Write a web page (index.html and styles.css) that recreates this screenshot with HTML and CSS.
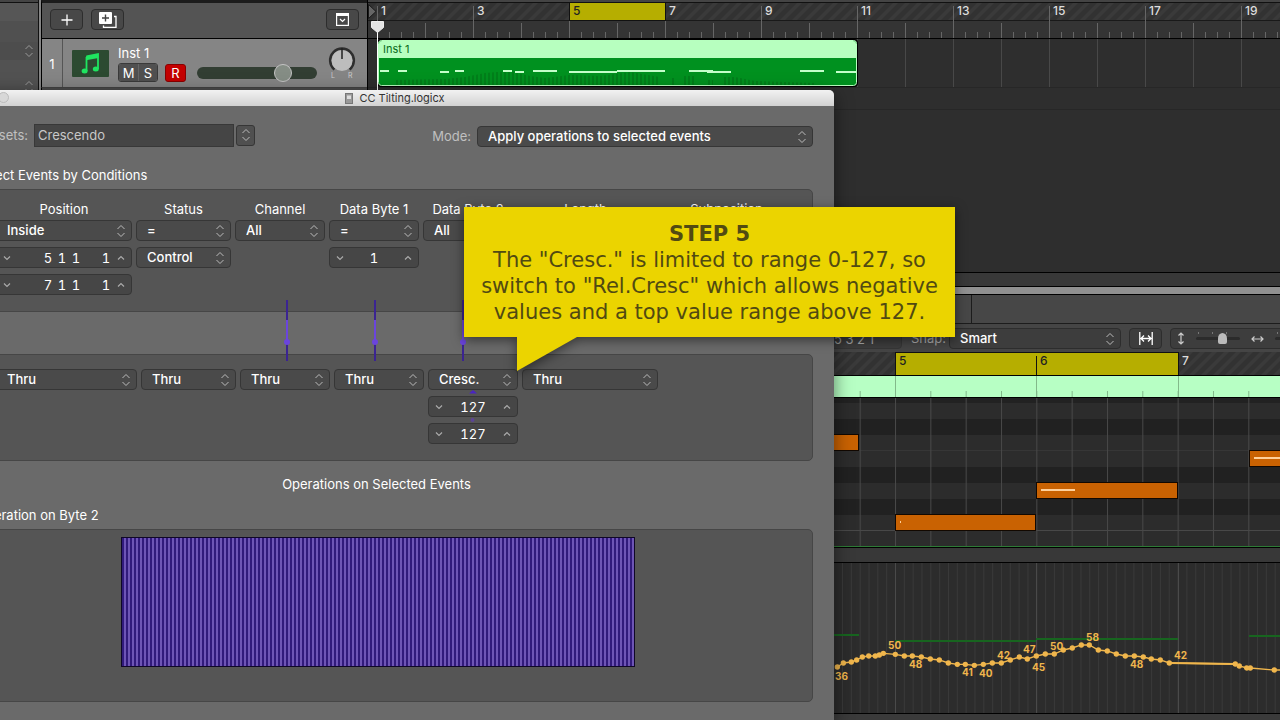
FILE: index.html
```html
<!DOCTYPE html>
<html lang="en">
<head>
<meta charset="utf-8">
<title>CC Tilting.logicx</title>
<link rel="stylesheet" href="styles.css">
</head>
<body>
<svg class="defs" width="0" height="0" aria-hidden="true">
  <defs>
    <symbol id="updown" viewBox="0 0 10 14"><path d="M1.500 5 5 1.500 8.500 5M1.500 9 5 12.500 8.500 9" fill="none" stroke="currentColor"/></symbol>
    <symbol id="down" viewBox="0 0 8 6"><path d="M1 1.500 4 4.500 7 1.500" fill="none" stroke="currentColor" stroke-width="1.200"/></symbol>
    <symbol id="up" viewBox="0 0 8 6"><path d="M1 4.500 4 1.500 7 4.500" fill="none" stroke="currentColor" stroke-width="1.200"/></symbol>
    <pattern id="hatch" width="12" height="12" patternUnits="userSpaceOnUse" patternTransform="skewX(-45)"><rect width="12" height="12" fill="#323232"/><rect width="5" height="12" fill="#3a3a3a"/></pattern>
  </defs>
</svg>
<main class="desktop">
  <section class="arrange" aria-label="Tracks">
    <aside class="inspector">
      <svg class="chev" width="10" height="14"><use href="#updown"/></svg>
      <svg class="chev" width="10" height="14"><use href="#updown"/></svg>
    </aside>
    <div class="tracks">
      <header class="track-tools">
        <button class="tool" aria-label="Add track"><svg width="12" height="12" viewBox="0 0 12 12"><path d="M6 .5v11M.5 6h11" stroke="#fff" stroke-width="1.300"/></svg></button>
        <button class="tool" aria-label="Duplicate track"><svg width="18" height="16" viewBox="0 0 18 16"><path d="M15 4.500h2v11H4.500v-2M15 4.500h2" fill="none" stroke="#fff" stroke-width="1.300"/><rect width="13" height="12" rx="1" fill="#fff"/><path d="M6.500 2.500v7M3 6h7" stroke="#444" stroke-width="1.400"/></svg></button>
        <button class="tool last" aria-label="Track header settings"><svg width="13" height="13" viewBox="0 0 13 13"><rect x=".6" y=".6" width="11.800" height="11.800" fill="none" stroke="#fff" stroke-width="1.200"/><path d="M0 1.700h13" stroke="#fff" stroke-width="2.600"/><path d="M4 6l2.500 2.500L9 6" fill="none" stroke="#fff" stroke-width="1.200"/></svg></button>
      </header>
      <article class="track">
        <span class="number">1</span>
        <svg class="track-icon" width="37" height="27" viewBox="0 0 37 27"><rect width="37" height="27" rx="1" fill="#2c4a31"/><path d="M14.500 6.500 26 4v15" fill="none" stroke="#1fe560" stroke-width="1.800"/><path d="M14 6.200 26.500 4v4L14 10.200z" fill="#1fe560"/><path d="M14.500 7v14" stroke="#1fe560" stroke-width="1.800"/><ellipse cx="12.600" cy="21" rx="3" ry="2.500" fill="#1fe560"/><ellipse cx="23.800" cy="19" rx="3" ry="2.500" fill="#1fe560"/></svg>
        <div class="track-main">
          <div class="track-name">Inst 1</div>
          <div class="track-buttons">
            <span class="pair"><button>M</button><button>S</button></span>
            <button class="record">R</button>
            <input class="volume" type="range" aria-label="Volume" min="0" max="100" value="75">
          </div>
        </div>
        <svg class="pan" width="32" height="34" viewBox="0 0 32 34"><path d="M8.500 23.500A11.800 11.800 0 1 1 23.500 23.500" fill="none" stroke="#2e2e2e" stroke-width="2.600"/><circle cx="16" cy="14.500" r="10.500" fill="#bdbdbd"/><path d="M16 2v11" stroke="#222" stroke-width="1.500"/><text x="5" y="32" class="pan-text">L</text><text x="22" y="32" class="pan-text">R</text></svg>
      </article>
    </div>
    <svg class="timeline" role="img" aria-label="Timeline">
      <defs>
        <pattern id="ticks" x="9" width="12" height="40" patternUnits="userSpaceOnUse"><path d="M.5 32v6" stroke="#666"/></pattern>
        <pattern id="bars" x="9" width="48" height="40" patternUnits="userSpaceOnUse"><path d="M.5 23v15" stroke="#666"/></pattern>
        <pattern id="doubles" x="9" width="96" height="40" patternUnits="userSpaceOnUse"><path d="M.5 6v32" stroke="#666"/></pattern>
        <pattern id="grid" x="9" width="48" height="200" patternUnits="userSpaceOnUse"><path d="M.5 0v200" stroke="#484848"/></pattern>
        <pattern id="velocity" width="4" height="50" patternUnits="userSpaceOnUse"><rect width="2" height="50" fill="#007f1a"/></pattern>
      </defs>
      <rect width="100%" height="3" fill="#444"/><path d="M0 2.500h2000" stroke="#111"/>
      <rect y="3" width="100%" height="17" fill="url(#hatch)"/>
      <rect y="20" width="100%" height="18" fill="#343434"/><path d="M0 20.500h2000" stroke="#191919"/>
      <rect x="9" width="2000" height="38" fill="url(#ticks)"/><rect x="9" width="2000" height="38" fill="url(#bars)"/><rect x="9" width="2000" height="38" fill="url(#doubles)"/>
      <rect x="201.500" y="2.500" width="96" height="18" fill="#b6ae00" stroke="#111"/>
      <path d="M0 38.500h2000" stroke="#000"/>
      <rect x="9" y="39" width="2000" height="48" fill="url(#grid)"/>
      <path d="M0 87.500h2000M0 109.500h2000" stroke="#272727"/>
      <path d="M.5 4.500 8 11.500.5 18.500z" fill="#666" stroke="#1a1a1a"/>
      <g class="bar-text"><text x="13" y="15">1</text><text x="109" y="15">3</text><text x="205" y="15" class="dark">5</text><text x="301" y="15">7</text><text x="397" y="15">9</text><text x="493" y="15">11</text><text x="589" y="15">13</text><text x="685" y="15">15</text><text x="781" y="15">17</text><text x="877" y="15">19</text></g>
      <rect x="9" y="39" width="481" height="48" rx="4" fill="#000"/>
      <rect x="10.500" y="40.500" width="478" height="45" rx="3" fill="#00911f" stroke="#b7ffbf"/>
      <path d="M11 58V44q0-3 3-3h471q3 0 3 3v14z" fill="#b7ffbf"/>
      <path d="M27 85V80L77 79 97 77 117 73 142 71 162 76 177 78 202 75 232 76 262 72 292 77V85zM303 85v-7h4v7zM314 85v-9h12v9zM340 85v-5h5v5zM355 85v-8h12l20 4 60 2v2z" fill="url(#velocity)"/>
      <path d="M12 71h9M30 71h9M72 72h9M87 71h9M135 71h9M147 72h9M165 71h24M201 72h48M249 71h48M321 71h24M339 72h24M432 71h24M468 72h20" stroke="#c4ffca" stroke-width="2"/>
      <text x="15" y="53" class="region-text">Inst 1</text>
      <path d="M9.500 30v65" stroke="#fff"/><path d="M3.500 21.500h12v6l-6 5-6-5z" fill="#e4e4e4" stroke="#eee"/>
    </svg>
  </section>
  <div class="divider"></div>
  <section class="editor" aria-label="Piano roll">
    <div class="editor-tabs"></div>
    <div class="editor-tools">
      <button class="tool held">5 3 2 1</button>
      <label class="snap" for="snap">Snap:</label>
      <span class="pick snap-pick"><select id="snap"><option>Smart</option></select><svg width="10" height="14"><use href="#updown"/></svg></span>
      <button class="tool" aria-label="Fit horizontally"><svg width="14" height="13" viewBox="0 0 14 13"><path d="M.8 0v13M13.200 0v13M2 6.500h10M5 3.500l-3 3 3 3M9 3.500l3 3-3 3" fill="none" stroke="#fff" stroke-width="1.300"/></svg></button>
      <div class="zoomers">
        <svg width="8" height="13" viewBox="0 0 8 13"><path d="M4 1v11M1.500 3.500 4 1l2.500 2.500M1.500 9.500 4 12l2.500-2.500" fill="none" stroke="#ccc" stroke-width="1.200"/></svg>
        <span class="zoom-slider"><input type="range" aria-label="Vertical zoom" value="64"></span>
        <svg class="wide" width="13" height="8" viewBox="0 0 13 8"><path d="M1 4h11M3.500 1.500 1 4l2.500 2.500M9.500 1.500 12 4 9.500 6.500" fill="none" stroke="#ccc" stroke-width="1.200"/></svg>
        <span class="zoom-slider"><input type="range" aria-label="Horizontal zoom" value="64"></span>
      </div>
    </div>
    <svg class="roll" role="img" aria-label="Notes">
      <defs>
        <pattern id="beats" x="895" width="35.330" height="300" patternUnits="userSpaceOnUse"><path d="M.5 0v300" stroke="#484848"/></pattern>
        <pattern id="greenBeats" x="895" width="35.330" height="60" patternUnits="userSpaceOnUse"><path d="M.5 39v7" stroke="#82b98a"/></pattern>
      </defs>
      <rect width="100%" height="24" fill="url(#hatch)"/>
      <rect x="895.500" y=".5" width="283" height="23" fill="#b6ae00" stroke="#111"/><path d="M1036.500 4v20" stroke="#111"/>
      <g class="bar-text"><text x="899" y="13" class="dark">5</text><text x="1040" y="13" class="dark">6</text><text x="1182" y="13">7</text></g>
      <rect y="24" width="100%" height="21" fill="#b7ffc4"/><rect y="24" width="100%" height="21" fill="url(#greenBeats)"/>
      <path d="M895.500 24v21M1036.500 24v21M1178.500 24v21" stroke="#82b98a"/>
      <path d="M0 23.500h3000M0 45.500h3000" stroke="#000"/>
      <rect y="46" width="100%" height="148" fill="#2c2c2c"/>
      <path d="M0 48.500h3000" stroke="#222" stroke-width="5"/><path d="M0 75h3000M0 123h3000M0 155h3000" stroke="#212121" stroke-width="16"/>
      <path d="M0 98.500h3000" stroke="#363636"/>
      <rect y="46" width="100%" height="148" fill="url(#beats)"/>
      <path d="M0 178.500h3000" stroke="#484848"/>
      <g fill="#c96202" stroke="#120800"><rect x="720.500" y="82.500" width="138" height="16"/><rect x="895.500" y="162.500" width="140" height="16"/><rect x="1036.500" y="130.500" width="141" height="16"/><rect x="1249.500" y="98.500" width="283" height="16"/></g>
      <path d="M1041 138h34M1254 106h80M900 170h1" stroke="#ffd09a" stroke-width="2"/>
      <path d="M0 194.500h3000" stroke="#2d7a35"/>
    </svg>
    <div class="lane-head"></div>
    <svg class="automation" role="img" aria-label="Controller automation">
      <defs>
        <pattern id="sub" x="895" width="8.830" height="300" patternUnits="userSpaceOnUse"><path d="M.5 0v300" stroke="#393939"/></pattern>
        <marker id="dot" markerWidth="18" markerHeight="18" refX="9" refY="9" markerUnits="userSpaceOnUse"><circle cx="9" cy="9" r="8" fill="#f0b64c"/></marker>
      </defs>
      <rect width="100%" height="100%" fill="url(#sub)"/><path d="M895.500 0v200M1036.500 0v200M1178.500 0v200" stroke="#4a4a4a"/>
      <path d="M834 72h25M895 78h141M1036 76h142M1249 73h300" stroke="#17651f" stroke-width="2"/>
      <g transform="translate(830 -3) scale(.3333)"><path d="M1018 309 1216 312" stroke="#f0b64c" stroke-width="6"/><polyline fill="none" stroke="#f0b64c" stroke-width="4" marker-start="url(#dot)" marker-mid="url(#dot)" marker-end="url(#dot)" points="22,321 40,309 64,306 80,300 97,291 116,288 136,288 148,285 160,280 196,283 223,288 247,288 274,291 301,297 328,300 355,309 382,313 406,313 433,316 460,313 487,309 514,309 541,300 568,291 592,297 619,288 646,282 673,282 700,270 727,264 754,255 778,255 805,270 832,273 859,282 886,288 913,288 940,291 964,297 991,300 1018,309 1216,312 1228,318 1250,324 1261,324 1333,330 1400,330"/></g>
      <g class="value-text"><text x="835" y="117">36</text><text x="888" y="86">50</text><text x="909" y="105">48</text><text x="962" y="113">41</text><text x="979" y="114">40</text><text x="997" y="96">42</text><text x="1023" y="90">47</text><text x="1032" y="108">45</text><text x="1050" y="87">50</text><text x="1086" y="78">58</text><text x="1130" y="105">48</text><text x="1174" y="96">42</text></g>
    </svg>
    <div class="editor-foot"></div>
  </section>

  <section class="window" aria-label="CC Tilting.logicx">
    <header class="titlebar">
      <button class="light" aria-label="Zoom window"></button>
      <svg width="8" height="11" viewBox="0 0 8 11"><rect x=".5" y=".5" width="7" height="10" fill="#999" stroke="#777"/><rect x="2" y="2.500" width="4" height="3.500" fill="#ddd"/></svg>
      <span>CC Tilting.logicx</span>
    </header>
    <div class="body">
      <div class="settings">
        <label for="preset">Presets:</label>
        <input id="preset" class="preset" type="text" value="Crescendo">
        <button class="preset-menu" aria-label="Choose preset"><svg width="10" height="14"><use href="#updown"/></svg></button>
        <label class="mode" for="mode">Mode:</label>
        <span class="pick mode-pick"><select id="mode"><option>Apply operations to selected events</option></select><svg width="10" height="14"><use href="#updown"/></svg></span>
      </div>
      <h2 class="conditions-title">Select Events by Conditions</h2>
      <div class="panel conditions">
        <div class="col">
          <label for="pos">Position</label>
          <div class="fields">
            <span class="pick"><select id="pos"><option>Inside</option></select><svg width="10" height="14"><use href="#updown"/></svg></span>
            <span class="step"><button aria-label="Decrease start"><svg width="8" height="6"><use href="#down"/></svg></button><span class="digits"><input aria-label="Start bar" value="5"><input aria-label="Start beat" value="1"><input aria-label="Start division" value="1"><input aria-label="Start tick" class="tick" value="1"></span><button aria-label="Increase start"><svg width="8" height="6"><use href="#up"/></svg></button></span>
            <span class="step"><button aria-label="Decrease end"><svg width="8" height="6"><use href="#down"/></svg></button><span class="digits"><input aria-label="End bar" value="7"><input aria-label="End beat" value="1"><input aria-label="End division" value="1"><input aria-label="End tick" class="tick" value="1"></span><button aria-label="Increase end"><svg width="8" height="6"><use href="#up"/></svg></button></span>
          </div>
        </div>
        <div class="col">
          <label for="status">Status</label>
          <div class="fields">
            <span class="pick"><select id="status"><option>=</option></select><svg width="10" height="14"><use href="#updown"/></svg></span>
            <span class="pick"><select aria-label="Event type"><option>Control</option></select><svg width="10" height="14"><use href="#updown"/></svg></span>
          </div>
        </div>
        <div class="col">
          <label for="channel">Channel</label>
          <div class="fields"><span class="pick"><select id="channel"><option>All</option></select><svg width="10" height="14"><use href="#updown"/></svg></span></div>
        </div>
        <div class="col">
          <label for="byte1">Data Byte 1</label>
          <div class="fields">
            <span class="pick"><select id="byte1"><option>=</option></select><svg width="10" height="14"><use href="#updown"/></svg></span>
            <span class="step"><button aria-label="Decrease byte 1"><svg width="8" height="6"><use href="#down"/></svg></button><input aria-label="Byte 1 value" value="1"><button aria-label="Increase byte 1"><svg width="8" height="6"><use href="#up"/></svg></button></span>
          </div>
        </div>
        <div class="col">
          <label for="byte2">Data Byte 2</label>
          <div class="fields"><span class="pick"><select id="byte2"><option>All</option></select><svg width="10" height="14"><use href="#updown"/></svg></span></div>
        </div>
        <div class="col">
          <label for="length">Length</label>
          <div class="fields"><span class="pick"><select id="length"><option>All</option></select><svg width="10" height="14"><use href="#updown"/></svg></span></div>
        </div>
        <div class="col">
          <label for="sub-pos">Subposition</label>
          <div class="fields"><span class="pick"><select id="sub-pos"><option>All</option></select><svg width="10" height="14"><use href="#updown"/></svg></span></div>
        </div>
      </div>
      <div class="panel operations">
        <svg class="wires" width="190" height="124" viewBox="0 0 190 124" aria-hidden="true"><path d="M2 0v61M90 0v61M178 0v61" stroke="#3b2492" stroke-width="2"/><path d="M2 20v22M90 20v22M178 20v22" stroke="#6b45dd" stroke-width="2"/><circle cx="2" cy="42" r="3" fill="#6b45dd"/><circle cx="90" cy="42" r="3" fill="#6b45dd"/><circle cx="178" cy="42" r="3" fill="#6b45dd"/><path d="M184 93.500 188 90l4 3.500z" fill="#4a24c4"/><circle cx="187.500" cy="120" r="2" fill="#5b4496"/></svg>
        <div class="fields"><span class="pick"><select aria-label="Position operation"><option>Thru</option></select><svg width="10" height="14"><use href="#updown"/></svg></span></div>
        <div class="fields"><span class="pick"><select aria-label="Status operation"><option>Thru</option></select><svg width="10" height="14"><use href="#updown"/></svg></span></div>
        <div class="fields"><span class="pick"><select aria-label="Channel operation"><option>Thru</option></select><svg width="10" height="14"><use href="#updown"/></svg></span></div>
        <div class="fields"><span class="pick"><select aria-label="Data byte 1 operation"><option>Thru</option></select><svg width="10" height="14"><use href="#updown"/></svg></span></div>
        <div class="fields">
          <span class="pick"><select aria-label="Data byte 2 operation"><option>Cresc.</option></select><svg width="10" height="14"><use href="#updown"/></svg></span>
          <span class="step"><button aria-label="Decrease first value"><svg width="8" height="6"><use href="#down"/></svg></button><input aria-label="First value" value="127"><button aria-label="Increase first value"><svg width="8" height="6"><use href="#up"/></svg></button></span>
          <span class="step"><button aria-label="Decrease second value"><svg width="8" height="6"><use href="#down"/></svg></button><input aria-label="Second value" value="127"><button aria-label="Increase second value"><svg width="8" height="6"><use href="#up"/></svg></button></span>
        </div>
        <div class="fields"><span class="pick"><select aria-label="Length operation"><option>Thru</option></select><svg width="10" height="14"><use href="#updown"/></svg></span></div>
      </div>
      <h2 class="operations-title">Operations on Selected Events</h2>
      <h2 class="byte-title">Operation on Byte 2</h2>
      <div class="panel map"><div class="map-bars"></div></div>
    </div>
  </section>

  <aside class="callout">
    <strong>STEP 5</strong>
    <p>The "Cresc." is limited to range 0-127, so switch to "Rel.Cresc" which allows negative values and a top value range above 127.</p>
    <svg class="tail" width="60" height="35" viewBox="0 0 60 35" aria-hidden="true"><path d="M0 0h60L0 34z" fill="#ebd400"/></svg>
  </aside>
</main>
</body>
</html>
```
FILE: styles.css
```css
* { box-sizing: border-box; }
body { margin: 0; background: #2e2e2e; color: #fff; font: 13px/18px Inter, "Liberation Sans", sans-serif; }
button, input, select { font: inherit; color: inherit; margin: 0; }
svg { display: block; flex: none; }
.defs { position: absolute; }
.desktop { position: relative; display: flex; flex-direction: column; min-height: 100vh; overflow: hidden; }

/* Tracks area */
.arrange { display: flex; height: 272px; }
.inspector { width: 39px; padding: 44px 4px 0 0; display: flex; flex-direction: column; align-items: flex-end; gap: 22px; color: #999; background: linear-gradient(#444 2px, #111 2px 3px, #565656 3px 21px, #505050 21px 42px, #4d4d4d 42px 60px, #525252 60px); border-right: 1px solid #111; }
.tracks { width: 329px; border-left: 2px solid #858585; display: flex; flex-direction: column; box-shadow: inset 1px 0 #000; border-right: 1px solid #000; background: #4d4d4d; }
.track-tools { height: 39px; padding: 6px 8px 0 8px; display: flex; gap: 8px; background: #545454; border: solid #000; border-width: 0 0 1px 1px; border-top: 3px solid #1c1c1c; }
.tool { flex: none; width: 33px; height: 21px; padding: 0; display: flex; align-items: center; justify-content: center; background: #484848; border: 1px solid #2d2d2d; border-radius: 4px; }
.last { margin-left: auto; }
.track { height: 49px; display: flex; align-items: center; background: #858585; border-left: 1px solid #000; border-bottom: 1px solid #444; }
.number { width: 21px; height: 48px; line-height: 50px; text-align: center; border-right: 1px solid #555; }
.track-icon { margin-left: 9px; }
.track-main { margin-left: 9px; flex: 1; }
.track-name { line-height: 18px; }
.track-buttons { display: flex; align-items: center; margin-top: 1px; }
.track-buttons button { width: 20px; height: 18px; padding: 0; line-height: 16px; border: 0; background: #505050; }
.pair { display: flex; border: 1px solid #3a3a3a; border-radius: 3px; overflow: hidden; height: 19px; }
.pair button { width: 19px; }
.pair button + button { border-left: 1px solid #666; }
.track-buttons .record { width: 21px; margin-left: 7px; background: #c40000; border: 1px solid #800; border-radius: 3px; }
.volume { appearance: none; width: 120px; height: 12px; margin-left: 11px; border-radius: 6px; background: #323e33; }
.volume::-webkit-slider-thumb { appearance: none; width: 18px; height: 18px; border: 1px solid #c4c4c4; border-radius: 50%; background: #858d85; }
.pan { margin-right: 9px; }
.pan-text { font-size: 7px; fill: #ccc; }
.timeline { flex: 1; min-width: 0; height: 272px; background: #2e2e2e; overflow: hidden; }
.bar-text { font-size: 12px; font-weight: 500; fill: #ddd; }
.dark { fill: #222; }
.region-text { font-size: 11px; fill: #086b1a; }

/* Piano roll editor */
.divider { height: 23px; background: linear-gradient(#000 1px, #383838 1px 14px, #000 14px 15px, #909090 15px 22px, #000 22px); }
.editor { flex: 1; display: flex; flex-direction: column; background: #383838; }
.editor-tabs { height: 29px; background: linear-gradient(90deg, transparent 971px, #1c1c1c 971px 972px, transparent 972px), #474747; border-bottom: 1px solid #1c1c1c; }
.editor-tools { height: 28px; padding: 4px 0 0 800px; display: flex; align-items: flex-start; background: #454545; overflow: hidden; }
.editor-tools .tool { margin-left: 8px; background: #3d3d3d; }
.editor-tools .held { width: 102px; margin: 0; padding-right: 27px; justify-content: flex-end; color: #aaa; border-color: #363636; }
.snap { flex: none; width: 47px; padding-left: 9px; color: #aaa; line-height: 21px; }
.snap-pick { width: 172px; flex: none; }
.zoomers { flex: none; margin-left: 8px; width: 160px; height: 21px; padding-left: 6px; display: flex; align-items: center; gap: 11px; border: 1px solid #2d2d2d; border-radius: 4px; background: #3d3d3d; }
.zoom-slider { display: flex; align-items: center; height: 19px; background: repeating-linear-gradient(90deg, #777 0 1px, transparent 1px 14px) 2px 3px / 43px 2px no-repeat; }
.zoom-slider input { appearance: none; width: 44px; height: 3px; background: #2b2b2b; border-radius: 2px; }
.zoom-slider input::-webkit-slider-thumb { appearance: none; width: 9px; height: 11px; background: #bbb; border-radius: 50% 50% 2px 2px; }
.roll { width: 100%; height: 195px; }
.lane-head { height: 16px; background: #383838; border: solid #000; border-width: 1px 0; }
.automation { width: 100%; flex: 1; min-height: 149px; background: #2c2c2c; }
.value-text { font-size: 10px; font-weight: 700; fill: #f0b64c; }
.editor-foot { height: 8px; background: #3a3a3a; border-top: 1px solid #000; }

/* Floating transform window */
.window { position: absolute; top: 90px; bottom: 0; left: -44px; width: 878px; overflow: hidden; background: #6a6a6a; border-radius: 5px 5px 0 0; box-shadow: 0 4px 18px rgba(0, 0, 0, .5); }
.titlebar { position: relative; height: 16px; display: flex; align-items: center; justify-content: center; gap: 6px; color: #333; font-size: 11px; background: linear-gradient(#f2f2f2, #d2d2d2); }
.light { position: absolute; left: 42px; top: 2px; width: 11px; height: 11px; padding: 0; border: 1px solid #bbb; border-radius: 50%; background: #d8d8d8; }
.body { padding: 17px 21px 17px 20px; }
.settings { display: flex; height: 24px; align-items: center; }
.settings label { width: 58px; padding-right: 6px; text-align: right; color: #c0c0c0; }
.preset { width: 200px; height: 23px; padding: 0 3px; color: #c8c8c8; background: #454545; border: 1px solid #383838; }
.preset-menu { width: 19px; height: 21px; margin-left: 2px; padding: 0; display: grid; place-items: center; color: #bbb; background: #505050; border: 1px solid #363636; border-radius: 3px; }
.settings .mode { flex: 1; margin-top: 2px; }
.mode-pick { width: 336px; margin-top: 2px; }
h2 { margin: 0; font-size: 13px; line-height: 18px; font-weight: 400; }
.conditions-title { margin: 19px 0 5px; }
.panel { position: relative; background: #555; border: 1px solid #464646; border-radius: 5px; }
.conditions, .operations { display: grid; column-gap: 4px; padding: 10px 19px 16px; }
.conditions { grid-template-columns: 136px 95px repeat(3, 90px) 137px 137px; }
.operations { grid-template-columns: 141px 95px repeat(3, 90px) 136px; margin-top: 42px; padding: 14px 19px 16px; }
.col > label { display: block; margin-bottom: 2px; text-align: center; line-height: 18px; }
.fields { display: flex; flex-direction: column; gap: 6px; }
.pick { position: relative; display: block; height: 21px; }
.pick select { appearance: none; width: 100%; height: 21px; padding: 0 24px 0 10px; display: block; color: #fff; font-weight: 500; line-height: 19px; background: #4a4a4a; border: 1px solid #363636; border-radius: 4px; }
.snap-pick select { background: #3d3d3d; border-color: #2d2d2d; }
.pick svg { position: absolute; right: 6px; top: 4px; color: #bbb; pointer-events: none; }
.step { display: flex; align-items: center; height: 21px; padding: 0 6px; background: #464646; border: 1px solid #363636; border-radius: 4px; }
.step button { width: 8px; height: 6px; padding: 0; border: 0; background: none; color: #aaa; }
.step input { flex: 1; min-width: 0; width: 30px; height: 19px; padding: 0; text-align: center; background: none; border: 0; font-variant-numeric: tabular-nums; }
.digits { flex: 1; display: flex; justify-content: flex-end; padding-right: 4px; }
.step .digits input { flex: none; width: 14px; }
.digits .tick { margin-left: 16px; }
.wires { position: absolute; left: 308px; top: -55px; overflow: visible; }
.operations-title { margin-top: 14px; padding-right: 36px; text-align: center; }
.byte-title { margin: 13px 0 5px; }
.map { height: 173px; padding: 7px 0 0 144px; }
.map-bars { width: 514px; height: 130px; border: 1px solid #100828; background: repeating-linear-gradient(90deg, #311a7c 0 2px, #6e55b6 2px 4px); }

/* Tutorial callout */
.callout { position: absolute; left: 464px; top: 207px; width: 491px; height: 130px; padding: 14px 8px 0; text-align: center; color: #514a12; background: #ebd400; font: 21px/26px "DejaVu Sans", sans-serif; filter: drop-shadow(0 3px 6px rgba(0, 0, 0, .5)); }
.callout strong { display: block; }
.callout p { margin: 0; }
.tail { position: absolute; left: 53px; top: 130px; }
```
